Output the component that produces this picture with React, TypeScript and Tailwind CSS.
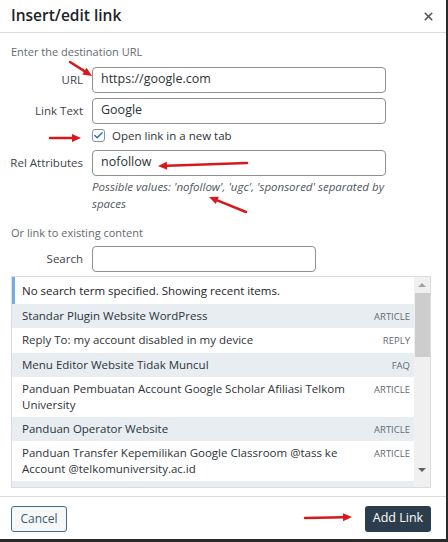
import { Check, X } from 'lucide-react';

const ITEMS = [
  { title: 'Standar Plugin Website WordPress', type: 'ARTICLE' },
  { title: 'Reply To: my account disabled in my device', type: 'REPLY' },
  { title: 'Menu Editor Website Tidak Muncul', type: 'FAQ' },
  { title: 'Panduan Pembuatan Account Google Scholar Afiliasi Telkom University', type: 'ARTICLE' },
  { title: 'Panduan Operator Website', type: 'ARTICLE' },
  { title: 'Panduan Transfer Kepemilikan Google Classroom @tass ke Account @telkomuniversity.ac.id', type: 'ARTICLE' },
];

function Arrow({ x1, y1, x2, y2 }: { x1: number; y1: number; x2: number; y2: number }) {
  const a = Math.atan2(y2 - y1, x2 - x1);
  const l = 9;
  const w = 4;
  const bx = x2 - l * Math.cos(a);
  const by = y2 - l * Math.sin(a);
  const px = -Math.sin(a) * w;
  const py = Math.cos(a) * w;
  return (
    <g>
      <line x1={x1} y1={y1} x2={bx} y2={by} stroke="#d7191c" strokeWidth={2.5} strokeLinecap="round" />
      <polygon points={`${x2},${y2} ${bx + px},${by + py} ${bx - px},${by - py}`} fill="#d7191c" />
    </g>
  );
}

function Label({ children }: { children: string }) {
  return (
    <div className="flex w-[72px] shrink-0 justify-end">
      <label className="whitespace-nowrap text-[11.5px] text-[#3c434a]">{children}</label>
    </div>
  );
}

function Field({ label, value }: { label: string; value: string }) {
  return (
    <div className="flex items-center">
      <Label>{label}</Label>
      <div className="ml-[9px] flex h-[26px] w-[294px] items-center rounded-[4px] border border-[#8c8f94] px-[8px] text-[12.5px] text-[#2c3338]">
        {value}
      </div>
    </div>
  );
}

export default function App() {
  return (
    <div
      className="relative h-[542px] w-[448px] overflow-hidden border-b-[3px] border-r-2 border-[#2a2a2a] bg-white"
      style={{ fontFamily: '"Open Sans", "Noto Sans", sans-serif' }}
    >
      {/* Header */}
      <div className="flex h-[33px] items-center justify-between border-b border-[#dcdcde] pl-[11px] pr-[11px]">
        <h1 className="text-[15.5px] font-semibold text-[#1d2327]">Insert/edit link</h1>
        <X size={13} strokeWidth={3} className="text-[#50575e]" />
      </div>

      {/* Body */}
      <div className="pl-[11px] pt-[11px]">
        <p className="text-[11px] text-[#646970]">Enter the destination URL</p>

        <div className="mt-[6px] flex flex-col gap-[5px]">
          <Field label="URL" value="https://google.com" />
          <Field label="Link Text" value="Google" />
        </div>

        <div className="ml-[81px] mt-[6px] flex h-[12px] items-center">
          <span className="flex h-[13px] w-[13px] items-center justify-center rounded-[3px] border border-[#8c8f94] bg-white">
            <Check size={11} strokeWidth={3} className="text-[#2271b1]" />
          </span>
          <span className="ml-[7px] text-[11.5px] text-[#2c3338]">Open link in a new tab</span>
        </div>

        <div className="mt-[8px]">
          <Field label="Rel Attributes" value="nofollow" />
        </div>
        <p className="ml-[81px] mt-[2px] w-[320px] text-[11.5px] italic leading-[17px] text-[#50575e]">
          Possible values: 'nofollow', 'ugc', 'sponsored' separated by spaces
        </p>

        <p className="mt-[13px] text-[11px] text-[#646970]">Or link to existing content</p>

        <div className="mt-[5px] flex items-center">
          <Label>Search</Label>
          <div className="ml-[9px] h-[26px] w-[224px] rounded-[4px] border border-[#8c8f94]" />
        </div>

        {/* Results */}
        <div className="mt-[4px] flex h-[212px] w-[420px] overflow-hidden border border-[#dcdcde]">
          <div className="flex-1">
            <div className="flex h-[27px] items-center border-l-[3px] border-[#72aee6] bg-white pl-[7px] text-[11.5px] text-[#1d2327]">
              No search term specified. Showing recent items.
            </div>
            {ITEMS.map((item, i) => (
              <div
                key={item.title}
                className={`flex items-start justify-between py-[4px] pl-[10px] pr-[4px] ${i % 2 === 0 ? 'bg-[#e8edf2]' : 'bg-white'}`}
              >
                <span className="w-[340px] text-[11.5px] leading-[16px] text-[#2c3338]">{item.title}</span>
                <span className="pt-[2px] text-[9.5px] text-[#646970]">{item.type}</span>
              </div>
            ))}
            <div className="h-[10px] bg-[#e8edf2]" />
          </div>
          <div className="flex w-[16px] flex-col items-center bg-[#f0f0f0]">
            <div className="flex h-[16px] w-full items-center justify-center">
              <span className="h-0 w-0 border-x-[4px] border-b-[4px] border-x-transparent border-b-[#a3a3a3]" />
            </div>
            <div className="h-[64px] w-[15px] bg-[#cdcdcd]" />
            <div className="flex-1" />
            <div className="mb-[9px] flex h-[16px] w-full items-center justify-center">
              <span className="h-0 w-0 border-x-[4px] border-t-[4px] border-x-transparent border-t-[#606060]" />
            </div>
          </div>
        </div>
      </div>

      {/* Footer */}
      <div className="mt-[8px] flex h-[44px] items-center justify-between border-t border-[#dcdcde] pl-[11px] pr-[15px]">
        <button className="h-[26px] w-[56px] rounded-[3px] border border-[#3e6d8a] bg-[#f6f7f7] text-[12px] text-[#3e5a6d]">
          Cancel
        </button>
        <button className="h-[26px] w-[66px] rounded-[3px] bg-[#2c3e4e] text-[12.5px] text-white">Add Link</button>
      </div>

      {/* Annotation arrows */}
      <svg className="pointer-events-none absolute left-0 top-0" width={448} height={542}>
        <Arrow x1={70} y1={62} x2={92} y2={76} />
        <Arrow x1={50} y1={138} x2={81} y2={138} />
        <Arrow x1={247} y1={163} x2={158} y2={166} />
        <Arrow x1={246} y1={212} x2={209} y2={197} />
        <Arrow x1={305} y1={518} x2={352} y2={517} />
      </svg>
    </div>
  );
}
